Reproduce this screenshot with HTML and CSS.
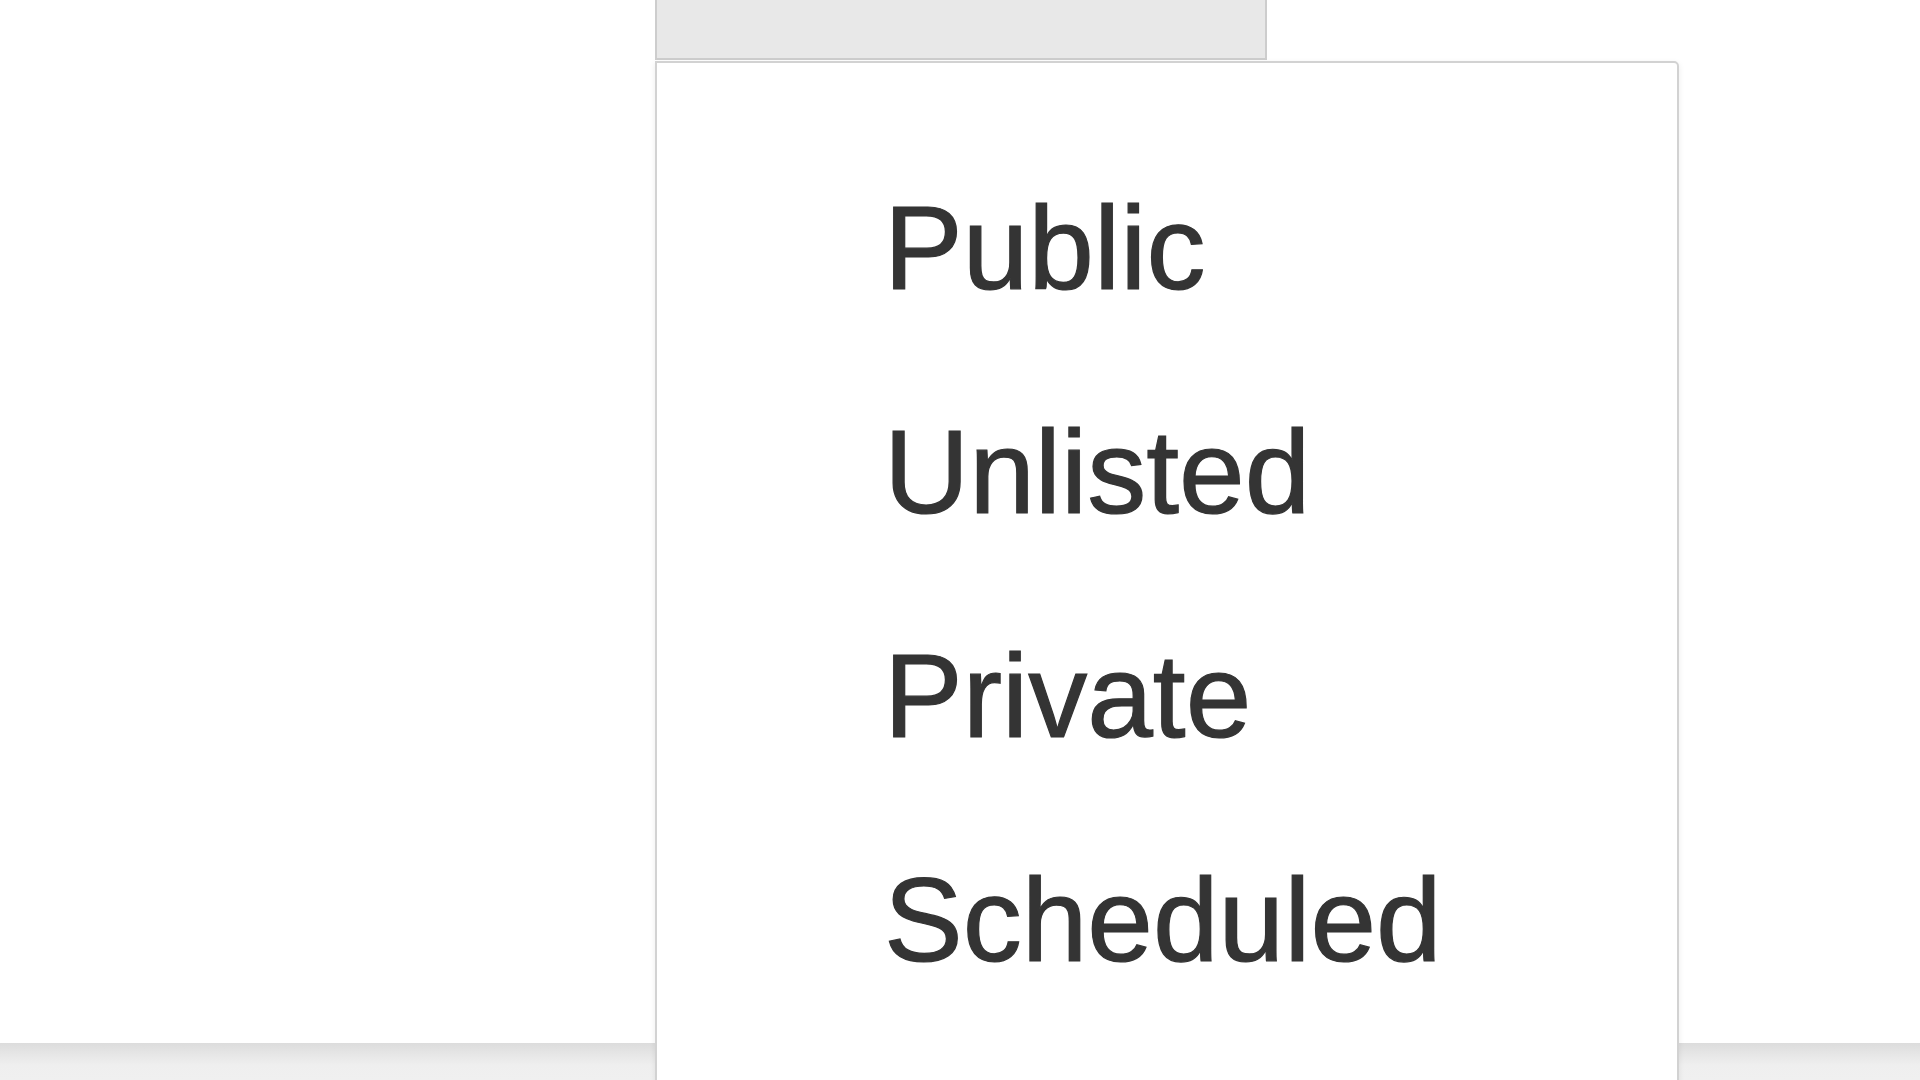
FILE: index.html
```html
<!DOCTYPE html>
<html lang="en">
<head>
<meta charset="utf-8">
<title>Visibility menu</title>
<link rel="stylesheet" href="styles.css">
</head>
<body>
<div class="page">
  <div class="topbar">
    <div class="topbar-spacer"></div>
    <div class="select-button"></div>
  </div>
  <div class="content"></div>
  <div class="footer"></div>
  <ul class="menu">
    <li class="menu-item">Public</li>
    <li class="menu-item">Unlisted</li>
    <li class="menu-item">Private</li>
    <li class="menu-item">Scheduled</li>
  </ul>
</div>
</body>
</html>
```
FILE: styles.css
```css
html, body {
  margin: 0;
  padding: 0;
  background: #ffffff;
}

.page {
  position: relative;
  width: 1920px;
  height: 1080px;
  overflow: hidden;
  display: flex;
  flex-direction: column;
  font-family: "Liberation Sans", Arial, sans-serif;
}

.topbar {
  display: flex;
  height: 60px;
  flex: none;
}

.topbar-spacer {
  width: 655px;
}

.select-button {
  width: 612px;
  background: #e8e8e8;
  border-left: 2px solid #cdcdcd;
  border-right: 2px solid #cdcdcd;
  border-bottom: 2px solid #cdcdcd;
  box-sizing: border-box;
}

.content {
  flex: 1;
}

.footer {
  height: 37px;
  flex: none;
  background: linear-gradient(#dcdcdc, #e6e6e6 30%, #efefef 60%, #f0f0f0);
}

.menu {
  position: absolute;
  left: 655px;
  top: 61px;
  width: 1024px;
  height: 1100px;
  box-sizing: border-box;
  margin: 0;
  padding: 73px 0 0 227px;
  list-style: none;
  background: #ffffff;
  border: 2px solid #d2d2d2;
  border-radius: 0 5px 0 0;
  box-shadow: 0 2px 6px rgba(0, 0, 0, 0.08);
}

.menu-item {
  font-size: 118px;
  line-height: 224px;
  color: #343434;
  white-space: nowrap;
  -webkit-text-stroke: 1.2px #343434;
  text-shadow: 0 0 1px rgba(0, 0, 0, 0.25);
}
```
